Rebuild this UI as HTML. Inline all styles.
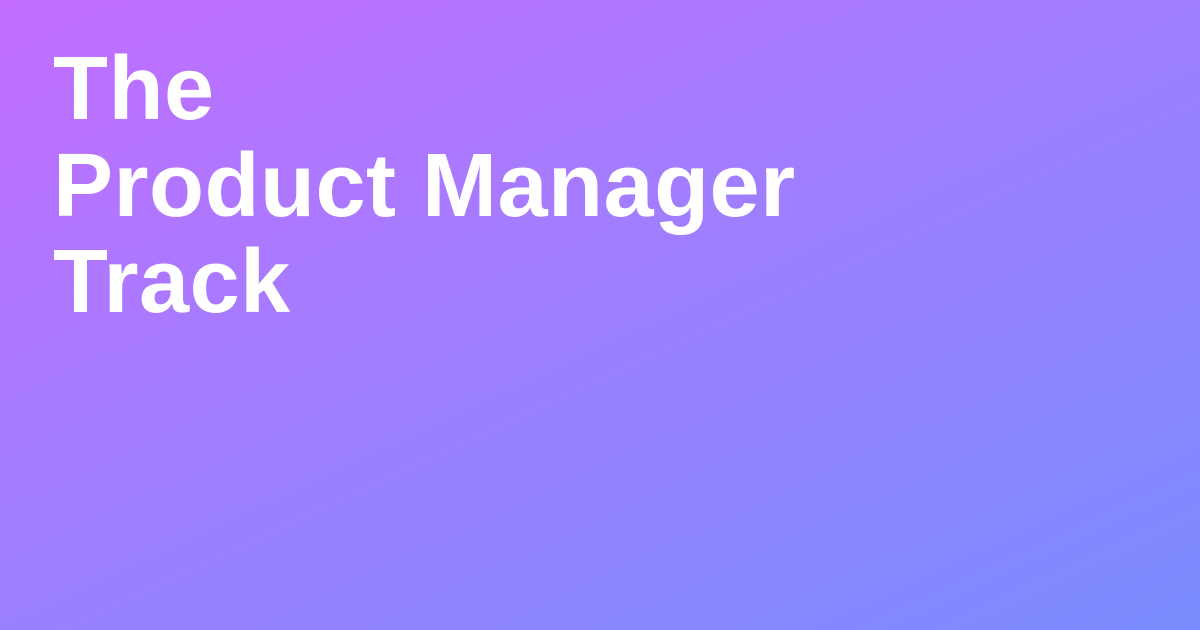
<!DOCTYPE html>
<html><head><meta charset="utf-8"><style>
html,body{margin:0;padding:0}
body{width:1200px;height:630px;overflow:hidden;background:linear-gradient(155deg,#c36dff 0%,#a07eff 45%,#7a8cfd 100%);position:relative}
.t{position:absolute;left:53px;color:#fff;font-family:"Liberation Sans",sans-serif;font-weight:bold;font-size:90px;line-height:90px;letter-spacing:0.5px;white-space:nowrap}
</style></head><body>
<div class="t" style="top:44px">The</div>
<div class="t" style="top:141px">Product Manager</div>
<div class="t" style="top:237px">Track</div>
</body></html>
